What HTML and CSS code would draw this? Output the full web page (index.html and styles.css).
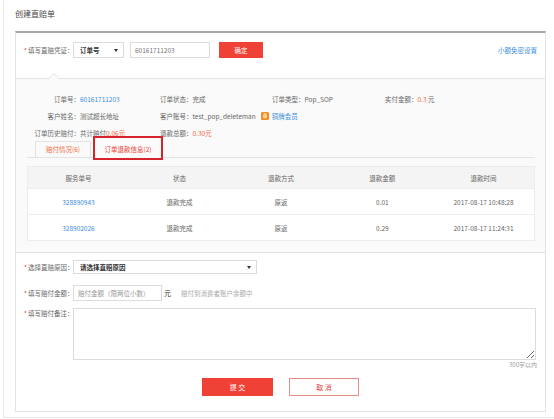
FILE: index.html
```html
<!DOCTYPE html>
<html lang="zh-CN">
<head>
<meta charset="utf-8">
<title>创建直赔单</title>
<link rel="stylesheet" href="styles.css">
</head>
<body>
<div class="page">
  <div class="title">创建直赔单</div>
  <div class="card">
    <div class="voucher-row">
      <div class="voucher-left">
        <span class="flabel"><i class="req">*</i>填写直赔凭证：</span>
        <div class="fselect sel-type"><span class="sel-text">订单号</span><span class="caret"></span></div>
        <div class="finput order-input">60161711203</div>
        <button class="btn-red btn-confirm">确定</button>
      </div>
      <a class="link">小额免密设置</a>
    </div>

    <div class="panel">
      <div class="info">
        <div class="c1"><span class="k">订单号：</span><span class="blue">60161711203</span></div>
        <div><span>订单状态：</span><span>完成</span></div>
        <div><span>订单类型：</span><span>Pop_SOP</span></div>
        <div><span>实付金额：</span><span class="orange">0.3</span> <span>元</span></div>

        <div class="c1"><span class="k">客户姓名：</span><span>测试超长地址</span></div>
        <div class="span2"><span>客户账号：</span><span>test_pop_deleteman</span>
          <svg class="medal" width="8" height="8" viewBox="0 0 8 8"><rect x="0" y="0" width="8" height="8" rx="1.5" fill="#f08a24"/><circle cx="4" cy="4.3" r="2.3" fill="#fbd38a"/><rect x="2.6" y="1" width="2.8" height="1.4" fill="#fbd38a"/></svg>
          <span class="blue">铜牌会员</span></div>
        <div></div>

        <div class="c1"><span class="k">订单历史赔付：</span><span>共计赔付</span><span class="orange">0.06元</span></div>
        <div><span>退款总额：</span><span class="orange">0.30元</span></div>
        <div></div>
        <div></div>
      </div>

      <div class="tabs">
        <div class="tab">赔付情况(6)</div>
        <div class="tab tab-active">订单退款信息(2)</div>
      </div>

      <table class="refund">
        <thead>
          <tr><th>服务单号</th><th>状态</th><th>退款方式</th><th>退款金额</th><th>退款时间</th></tr>
        </thead>
        <tbody>
          <tr><td class="blue">328890943</td><td>退款完成</td><td>原返</td><td>0.01</td><td>2017-08-17 10:48:28</td></tr>
          <tr><td class="blue">328902026</td><td>退款完成</td><td>原返</td><td>0.29</td><td>2017-08-17 11:24:31</td></tr>
        </tbody>
      </table>
    </div>

    <div class="form">
      <div class="frow row-reason">
        <span class="flabel"><i class="req">*</i>选择直赔原因：</span>
        <div class="fselect sel-reason"><span class="sel-text">请选择直赔原因</span><span class="caret"></span></div>
      </div>
      <div class="frow row-amount">
        <span class="flabel"><i class="req">*</i>填写赔付金额：</span>
        <div class="finput amount-input">赔付金额（限两位小数）</div>
        <span class="unit">元</span>
        <span class="tip">赔付到消费者账户余额中</span>
      </div>
      <div class="frow row-remark">
        <span class="flabel"><i class="req">*</i>填写赔付备注：</span>
        <textarea class="remark"></textarea>
      </div>
      <div class="hint">300字以内</div>
      <div class="actions">
        <button class="btn-red btn-submit">提 交</button>
        <button class="btn-cancel">取 消</button>
      </div>
    </div>
  </div>
</div>
</body>
</html>
```

FILE: styles.css
```css
* { box-sizing: border-box; }

body {
  margin: 0;
  font-family: "Noto Sans CJK SC", "Noto Sans", sans-serif;
  font-size: 6.5px;
  color: #666;
  background: #fff;
}

.page {
  margin-left: 3px;
  width: 551px;
  border-left: 1px solid #e6e6e6;
  border-bottom: 1px solid #e6e6e6;
  padding: 0 8px 5px 11px;
}

.title {
  height: 31px;
  line-height: 28px;
  font-size: 8px;
  color: #444;
}

.card {
  border-top: 2px solid #a8a8a8;
  border-left: 1px solid #e3e3e3;
  border-right: 1px solid #e3e3e3;
  border-bottom: 1px solid #e3e3e3;
  padding-bottom: 15px;
}

/* voucher row */
.voucher-row {
  display: flex;
  justify-content: space-between;
  align-items: center;
  height: 45px;
  padding: 9px 8px 20px 8px;
}
.voucher-left { display: flex; align-items: center; }

.flabel { width: 49px; flex: none; white-space: nowrap; color: #666; }
.req { font-style: normal; color: #e4393c; margin-right: 1px; }

.fselect {
  display: flex;
  align-items: center;
  justify-content: space-between;
  border: 1px solid #dcdcdc;
  background: #fff;
  padding: 0 5px 0 6px;
}
.sel-text { color: #333; font-weight: bold; }
.caret {
  width: 0; height: 0;
  border-top: 3px solid #333;
  border-left: 2px solid transparent;
  border-right: 2px solid transparent;
}
.sel-type { width: 51px; height: 16px; }

.finput {
  border: 1px solid #dcdcdc;
  background: #fff;
  padding-left: 4px;
  display: flex;
  align-items: center;
}
.order-input { width: 80px; height: 16px; margin-left: 6px; color: #777; }

.btn-red {
  border: none;
  background: #ef4136;
  color: #fff;
  font-family: inherit;
  padding: 0;
}
.btn-confirm { width: 44px; height: 16px; margin-left: 9px; font-size: 6.5px; }

.link { color: #3b8ee0; }

/* panel */
.panel {
  position: relative;
  background: #fafafa;
  border-top: 1px solid #e3e3e3;
  border-bottom: 1px solid #e3e3e3;
  padding: 11px 10px 11px 11px;
}
.panel::before,
.panel::after {
  content: "";
  position: absolute;
  left: 33px;
  width: 0; height: 0;
  border-left: 5px solid transparent;
  border-right: 5px solid transparent;
}
.panel::before { top: -6px; border-bottom: 5px solid #e3e3e3; }
.panel::after { top: -5px; border-bottom: 5px solid #fafafa; }

.info {
  display: grid;
  grid-template-columns: 133px 112px 113px 1fr;
  grid-auto-rows: 17px;
  align-items: center;
  white-space: nowrap;
}
.info .k { display: inline-block; width: 53px; text-align: right; }
.span2 { grid-column: span 2; display: flex; align-items: center; }
.medal { margin: 0 3px 0 5px; }

.blue { color: #3b8ee0; }
.orange { color: #f06a3a; }

/* tabs */
.tabs {
  display: flex;
  align-items: flex-end;
  height: 17px;
  border-bottom: 1px solid #e3e3e3;
  padding-left: 8px;
}
.tab {
  width: 56px;
  height: 16px;
  line-height: 15px;
  text-align: center;
  border: 1px solid #e3e3e3;
  border-bottom: none;
  color: #f06a3a;
}
.tab-active {
  width: 70px;
  height: 24px;
  margin-left: 2px;
  margin-bottom: -3px;
  border: 2px solid #d7232b;
  line-height: 15px;
  padding-top: 4px;
  color: #ef3d36;
  background: #fafafa;
}

/* table */
.refund {
  width: 100%;
  margin-top: 8px;
  border-collapse: collapse;
  table-layout: fixed;
  background: #fff;
  border: 1px solid #ececec;
}
.refund th {
  height: 22px;
  background: #f4f4f4;
  font-weight: normal;
  color: #666;
  padding: 0;
}
.refund td {
  height: 26px;
  text-align: center;
  border-top: 1px solid #ececec;
  padding: 0;
}

/* form */
.form { padding: 7px 8px 0 8px; }
.frow { display: flex; align-items: center; }
.sel-reason { width: 184px; height: 14px; }
.row-amount { margin-top: 11px; }
.amount-input { width: 89px; height: 16px; color: #999; }
.unit { margin-left: 2px; color: #333; font-size: 7px; }
.tip { margin-left: 10px; color: #aaa; }
.row-remark { margin-top: 7px; align-items: flex-start; }
.row-remark .flabel { line-height: 10px; }
.remark {
  width: 463px;
  height: 52px;
  border: 1px solid #dcdcdc;
  margin: 0;
  resize: both;
  background: #fff;
}
.hint {
  text-align: right;
  line-height: 10px;
  color: #999;
  font-size: 6px;
}
.actions {
  display: flex;
  justify-content: center;
  gap: 16px;
  margin-top: 8px;
}
.btn-submit { width: 71px; height: 18px; font-size: 7px; }
.btn-cancel {
  width: 70px;
  height: 18px;
  border: 1px solid #e88a86;
  background: #fff;
  color: #e4393c;
  font-family: inherit;
  font-size: 7px;
  padding: 0;
}
```
